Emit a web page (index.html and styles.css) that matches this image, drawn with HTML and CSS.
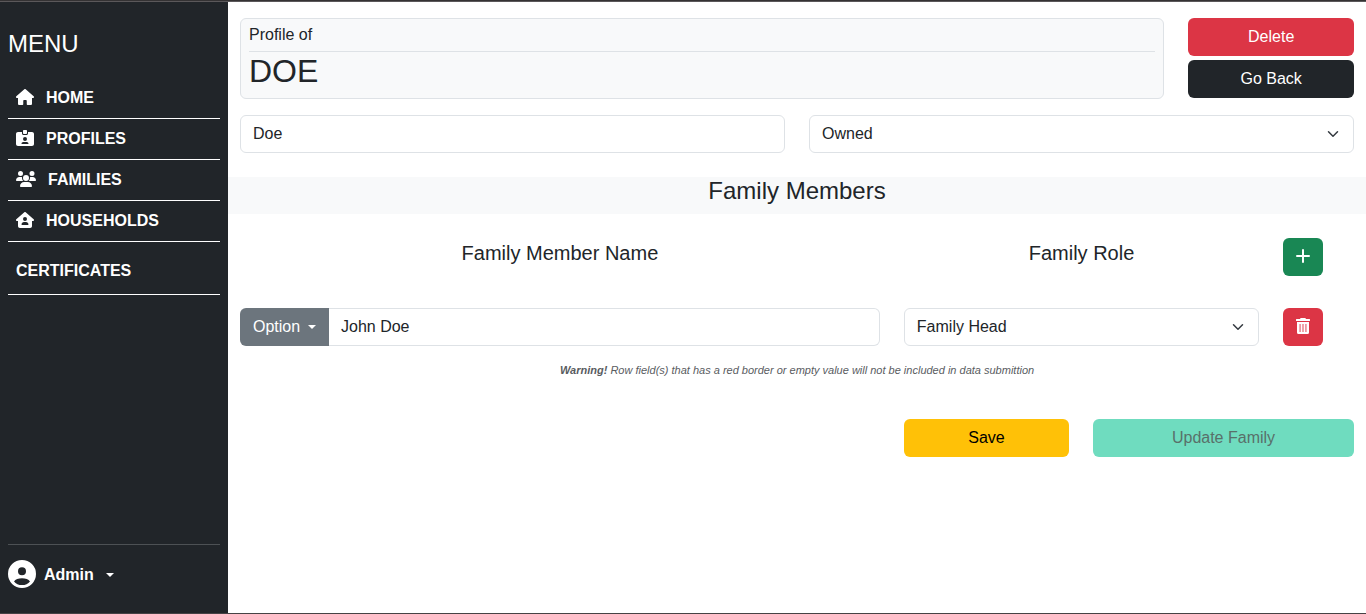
FILE: index.html
```html
<!DOCTYPE html>
<html lang="en">
<head>
<meta charset="utf-8">
<title>Family Profile</title>
<link rel="stylesheet" href="styles.css">
</head>
<body>
<div class="app">
  <aside class="sidebar">
    <h1 class="menu-title">MENU</h1>
    <nav class="nav">
      <a class="nav-item"><svg width="18" height="16" viewBox="0 0 576 512"><path d="M575.8 255.500c0 18-15 32.100-32 32.100h-32l.7 160.200c0 2.700-.2 5.400-.5 8.100V472c0 22.100-17.900 40-40 40h-104c-13 0-24-11-24-24v-104c0-17.700-14.300-32-32-32h-48c-17.700 0-32 14.300-32 32v104c0 13-11 24-24 24h-104c-22.100 0-40-17.900-40-40V287.600H32c-18 0-32-14-32-32.100 0-9 3-17 10-24L266.400 8c7-7 15-8 22-8s15 2 21 7l255.400 224.500c8 7 12 15 11 24z"/></svg><span>HOME</span></a>
      <a class="nav-item"><svg width="18" height="16" viewBox="0 0 576 512"><path fill-rule="evenodd" d="M256 0h64c17.700 0 32 14.300 32 32v64c0 17.700-14.300 32-32 32h-64c-17.700 0-32-14.300-32-32V32c0-17.700 14.300-32 32-32zM64 64h128v48c0 26.500 21.500 48 48 48h96c26.500 0 48-21.500 48-48V64h128c35.300 0 64 28.700 64 64v320c0 35.300-28.700 64-64 64H64c-35.300 0-64-28.700-64-64V128c0-35.300 28.700-64 64-64zm112 373.300c0 5.900 4.800 10.700 10.700 10.700h202.600c5.900 0 10.700-4.800 10.700-10.700 0-29.500-23.900-53.300-53.300-53.300H229.300c-29.500 0-53.300 23.900-53.300 53.300zM288 352a64 64 0 1 0 0-128 64 64 0 1 0 0 128z"/></svg><span>PROFILES</span></a>
      <a class="nav-item"><svg width="20" height="16" viewBox="0 0 640 512"><path d="M144 0a80 80 0 1 1 0 160 80 80 0 1 1 0-160zM512 0a80 80 0 1 1 0 160 80 80 0 1 1 0-160zM0 298.700C0 239.800 47.800 192 106.700 192h42.700c15.900 0 31 3.500 44.600 9.700-1.300 7.200-1.900 14.700-1.900 22.300 0 38.200 16.800 72.500 43.300 96H21.300C9.600 320 0 310.400 0 298.700zM405.300 320h-.7c26.600-23.500 43.300-57.800 43.300-96 0-7.600-.7-15-1.900-22.300 13.600-6.300 28.700-9.700 44.600-9.700h42.700c58.900 0 106.700 47.800 106.700 106.700 0 11.800-9.600 21.300-21.300 21.300zM224 224a96 96 0 1 1 192 0 96 96 0 1 1-192 0zM128 485.300C128 411.700 187.700 352 261.300 352h117.400c73.600 0 133.300 59.700 133.300 133.300 0 14.700-11.900 26.700-26.700 26.700H154.700c-14.700 0-26.700-11.900-26.700-26.700z"/></svg><span>FAMILIES</span></a>
      <a class="nav-item"><svg width="18" height="16" viewBox="0 0 576 512"><path fill-rule="evenodd" d="M575.800 255.500c0 18-15 32.100-32 32.100h-32l.7 160.200c.2 35.500-28.500 64.300-64 64.300H128c-35.300 0-64-28.700-64-64V287.600H32c-18 0-32-14-32-32.100 0-9 3-17 10-24L266.400 8c7-7 15-8 22-8s15 2 21 7l255.400 224.500c8 7 12 15 11 24zM352 224a64 64 0 1 0-128 0 64 64 0 1 0 128 0zm-96 96c-44.200 0-80 35.800-80 80 0 8.800 7.200 16 16 16h192c8.800 0 16-7.200 16-16 0-44.200-35.800-80-80-80z"/></svg><span>HOUSEHOLDS</span></a>
      <a class="nav-item nav-tall"><span>CERTIFICATES</span></a>
    </nav>
    <div class="account">
      <svg width="28" height="28" viewBox="0 0 28 28"><path fill-rule="evenodd" d="M14 0a14 14 0 1 1 0 28 14 14 0 0 1 0-28zm0 7.200a4 4 0 1 0 0 8 4 4 0 0 0 0-8zm0 11c-3.600 0-6.600 1.200-8 3.200 1.800 2.400 4.700 3.700 8 3.700s6.200-1.300 8-3.700c-1.400-2-4.400-3.200-8-3.200z"/></svg>
      <strong>Admin</strong><i class="caret"></i>
    </div>
  </aside>
  <main class="main">
    <div class="grid top">
      <section class="card">
        <div class="card-label">Profile of</div>
        <h2 class="card-name">DOE</h2>
      </section>
      <div class="actions">
        <button class="btn red">Delete</button>
        <button class="btn dark">Go Back</button>
      </div>
    </div>
    <div class="grid fields">
      <div class="field half">Doe</div>
      <div class="field half"><span>Owned</span><svg class="chevron" width="16" height="12" viewBox="0 0 16 16"><path d="m2 5 6 6 6-6"/></svg></div>
    </div>
    <h3 class="band">Family Members</h3>
    <div class="grid heads">
      <h4 class="head c7">Family Member Name</h4>
      <h4 class="head c4">Family Role</h4>
      <button class="btn icon green"><svg width="14" height="16" viewBox="0 0 14 16"><path d="M7 2v12M1 8h12" fill="none" stroke="#fff" stroke-width="2" stroke-linecap="round"/></svg></button>
    </div>
    <div class="grid member">
      <div class="group c7">
        <button class="option">Option<i class="caret"></i></button>
        <div class="field joined">John Doe</div>
      </div>
      <div class="field c4"><span>Family Head</span><svg class="chevron" width="16" height="12" viewBox="0 0 16 16"><path d="m2 5 6 6 6-6"/></svg></div>
      <button class="btn icon red"><svg width="14" height="16" viewBox="0 0 14 16"><path fill-rule="evenodd" d="M5 0h4q.7 0 1 1h3.500q.5 0 .5.500v1q0 .5-.5.500H.5Q0 3 0 2.500v-1Q0 1 .5 1H4q.3-1 1-1zM1 4h12v10.500q0 1.500-1.500 1.500h-9Q1 16 1 14.500zM3.600 6v8h.9V6zm2.950 0v8h.9V6zm2.950 0v8h.9V6z"/></svg></button>
    </div>
    <p class="warning"><b>Warning!</b> Row field(s) that has a red border or empty value will not be included in data submittion</p>
    <div class="grid submit">
      <button class="btn yellow save">Save</button>
      <button class="btn teal update" disabled>Update Family</button>
    </div>
  </main>
</div>
</body>
</html>
```
FILE: styles.css
```css
* { box-sizing: border-box; }
body {
  margin: 0;
  font: 16px/24px "Liberation Sans", Arial, sans-serif;
  color: #212529;
  background: #fff;
}
h1, h2, h3, h4, p { margin: 0; font-weight: 400; }
svg { display: block; flex: none; fill: currentColor; }
.app {
  display: flex;
  height: 614px;
  border-top: 1px solid #343233;
  border-bottom: 1px solid #454244;
}
.sidebar {
  display: flex;
  flex-direction: column;
  width: 228px;
  flex: none;
  padding: 27px 8px 16px;
  border-top: 1px solid #5b585a;
  background: #212529;
  color: #fff;
}
.menu-title { font-size: 24px; line-height: 29px; }
.nav { margin-top: 20px; }
.nav-item {
  display: flex;
  align-items: center;
  gap: 12px;
  height: 41px;
  padding: 0 8px;
  border-bottom: 1px solid #fff;
  font-weight: 700;
}
.nav-item svg, .icon svg { margin-bottom: 2px; }
.nav-tall { height: 53px; padding-top: 5px; }
.account {
  display: flex;
  align-items: center;
  gap: 8px;
  height: 53px;
  margin-top: auto;
  padding-top: 7px;
  border-top: 1px solid #4d5154;
}
.account svg { margin-bottom: 1px; }
.caret {
  width: 0;
  height: 0;
  border: 4.8px solid transparent;
  border-top-color: currentColor;
  border-bottom: 0;
}
.account .caret { margin-left: 4px; border-width: 4px 4px 0; }
.main { flex: 1; min-width: 0; padding-top: 16px; border-top: 1px solid #5b585a; }
.grid {
  display: grid;
  grid-template-columns: repeat(12, minmax(0, 1fr));
  column-gap: 24px;
  padding: 0 12px;
}
.card {
  grid-column: span 10;
  height: 81px;
  padding: 4px 8px;
  border: 1px solid #dee2e6;
  border-radius: 6px;
  background: #f8f9fa;
}
.card-label { height: 29px; border-bottom: 1px solid #dee2e6; }
.card-name { font-size: 32px; line-height: 38px; }
.actions { grid-column: span 2; display: flex; flex-direction: column; gap: 4px; }
.btn {
  display: flex;
  align-items: center;
  justify-content: center;
  height: 38px;
  padding: 0 12px;
  border: 0;
  border-radius: 6px;
  font: inherit;
  color: #fff;
}
.red { background: #dc3545; }
.dark { background: #212529; }
.green { background: #198754; }
.yellow { background: #ffc107; color: #000; }
.teal { background: #6fdcbf; color: #59706a; }
.fields { margin-top: 16px; }
.field {
  display: flex;
  align-items: center;
  justify-content: space-between;
  height: 38px;
  padding: 0 12px;
  border: 1px solid #dee2e6;
  border-radius: 6px;
}
.chevron { fill: none; stroke: #343a40; stroke-width: 2; stroke-linecap: round; stroke-linejoin: round; }
.half { grid-column: span 6; }
.band {
  height: 37px;
  margin-top: 24px;
  background: #f8f9fa;
  font-size: 24px;
  line-height: 27px;
  text-align: center;
}
.heads { margin-top: 24px; }
.head { padding-top: 3px; font-size: 20px; text-align: center; }
.c7 { grid-column: span 7; }
.c4 { grid-column: span 4; }
.icon { width: 40px; padding: 0; }
.member { margin-top: 32px; }
.group { display: flex; }
.option {
  display: flex;
  align-items: center;
  gap: 8px;
  width: 89px;
  padding: 0 13px;
  border: 0;
  border-radius: 6px 0 0 6px;
  background: #6c757d;
  color: #fff;
  font: inherit;
}
.option .caret { margin-bottom: 1px; }
.joined { flex: 1; border-left: 0; border-radius: 0 6px 6px 0; }
.warning {
  margin-top: 12px;
  font-size: 11px;
  font-style: italic;
  text-align: center;
  color: #595c5f;
}
.submit {
  grid-template-columns: 165px 261px;
  justify-content: end;
  margin-top: 37px;
}
```
